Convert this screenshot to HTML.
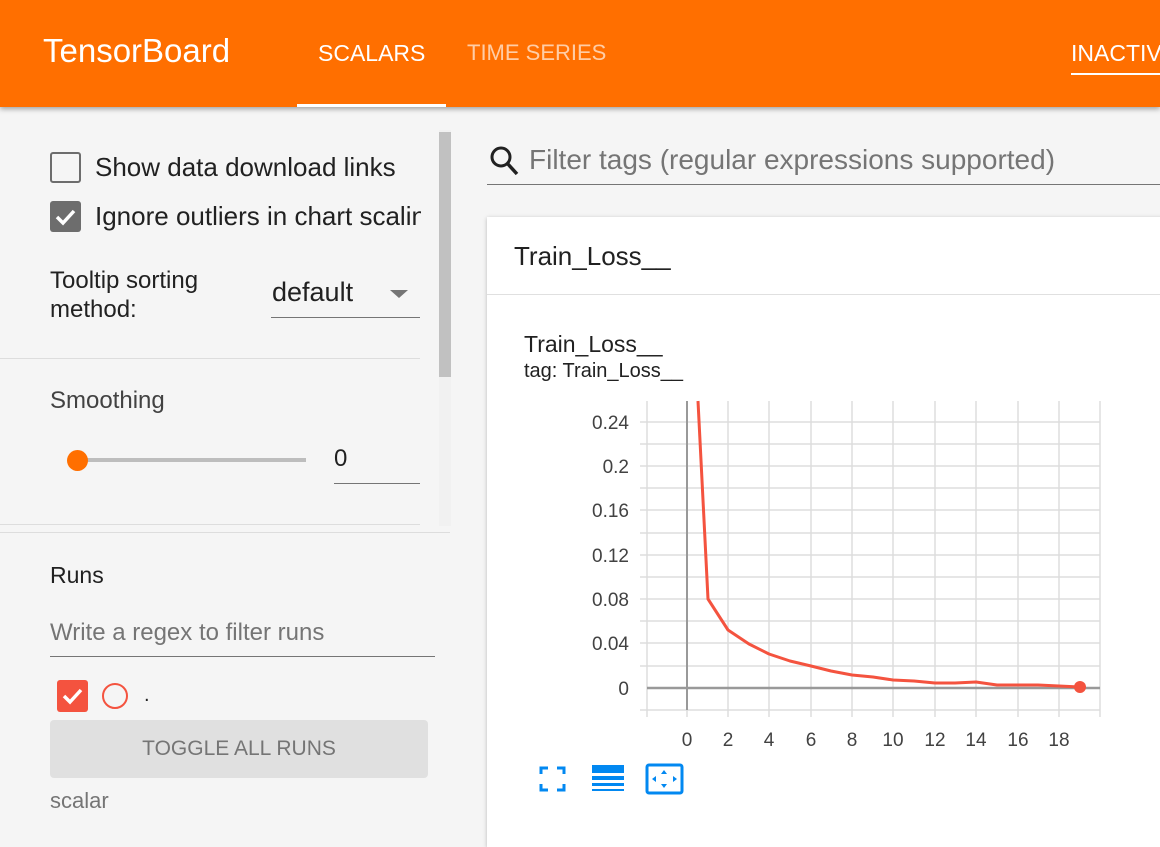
<!DOCTYPE html>
<html><head><meta charset="utf-8"><style>
*{margin:0;padding:0;box-sizing:border-box}
body{width:1160px;height:835px;overflow:hidden;background:#f5f5f5;font-family:"Liberation Sans",sans-serif;position:relative}
.a{position:absolute;white-space:nowrap}
</style></head><body>
<div class="a" style="left:0;top:0;width:1160px;height:107px;background:#ff6f00;box-shadow:0 2px 5px rgba(0,0,0,.35)"></div>
<div class="a" style="left:43px;top:32px;font-size:33px;color:#fff">TensorBoard</div>
<div class="a" style="left:318px;top:40px;font-size:23px;color:#fff">SCALARS</div>
<div class="a" style="left:467px;top:40px;font-size:22px;color:rgba(255,255,255,.65)">TIME SERIES</div>
<div class="a" style="left:297px;top:104px;width:149px;height:3px;background:#fff"></div>
<div class="a" style="left:1071px;top:40px;font-size:23px;color:#fff">INACTIVE</div>
<div class="a" style="left:1071px;top:73px;width:89px;height:2px;background:#fff"></div>

<!-- sidebar -->
<div class="a" style="left:50px;top:152px;width:31px;height:31px;border:2px solid #6d6d6d;border-radius:3px"></div>
<div class="a" style="left:95px;top:152px;font-size:26px;color:#212121">Show data download links</div>
<div class="a" style="left:50px;top:201px;width:31px;height:31px;background:#6d6d6d;border-radius:3px"></div>
<svg class="a" style="left:50px;top:201px" width="31" height="31"><path d="M7 16l6 6 11-12" stroke="#fff" stroke-width="3.5" fill="none"/></svg>
<div class="a" style="left:95px;top:201px;width:326px;overflow:hidden;font-size:26px;color:#212121">Ignore outliers in chart scaling</div>
<div class="a" style="left:50px;top:266px;font-size:24px;color:#212121;line-height:29px">Tooltip sorting<br>method:</div>
<div class="a" style="left:272px;top:277px;font-size:27px;color:#212121">default</div>
<svg class="a" style="left:390px;top:290px" width="20" height="10"><path d="M0 0h18l-9 8z" fill="#757575"/></svg>
<div class="a" style="left:271px;top:317px;width:149px;height:1px;background:#757575"></div>
<div class="a" style="left:0;top:358px;width:420px;height:1px;background:#ddd"></div>
<div class="a" style="left:50px;top:387px;font-size:24px;color:#424242">Smoothing</div>
<div class="a" style="left:78px;top:458px;width:228px;height:4px;background:#bdbdbd"></div>
<div class="a" style="left:67px;top:450px;width:21px;height:21px;border-radius:50%;background:#ff6f00"></div>
<div class="a" style="left:334px;top:445px;font-size:24px;color:#212121">0</div>
<div class="a" style="left:334px;top:483px;width:86px;height:1px;background:#757575"></div>
<div class="a" style="left:0;top:524px;width:420px;height:1px;background:#ddd"></div>
<div class="a" style="left:439px;top:130px;width:12px;height:396px;background:#f1f1f1"></div>
<div class="a" style="left:439px;top:132px;width:12px;height:245px;background:#c1c1c1"></div>
<div class="a" style="left:0;top:532px;width:450px;height:1px;background:#ddd"></div>
<div class="a" style="left:50px;top:562px;font-size:23px;color:#212121">Runs</div>
<div class="a" style="left:50px;top:619px;font-size:24px;color:#757575">Write a regex to filter runs</div>
<div class="a" style="left:50px;top:656px;width:385px;height:1px;background:#757575"></div>
<div class="a" style="left:57px;top:680px;width:31px;height:32px;background:#f4533f;border-radius:3px"></div>
<svg class="a" style="left:57px;top:680px" width="31" height="32"><path d="M7 16l6 6 11-12" stroke="#fff" stroke-width="3.5" fill="none"/></svg>
<div class="a" style="left:102px;top:683px;width:26px;height:26px;border:2.5px solid #f4533f;border-radius:50%"></div>
<div class="a" style="left:144px;top:684px;font-size:20px;color:#212121">.</div>
<div class="a" style="left:50px;top:720px;width:378px;height:58px;background:#e0e0e0;border-radius:4px;text-align:center;line-height:58px;font-size:21px;color:#757575">TOGGLE ALL RUNS</div>
<div class="a" style="left:50px;top:788px;font-size:22px;color:#757575">scalar</div>

<!-- main -->
<svg class="a" style="left:488px;top:143px" width="36" height="36"><circle cx="13" cy="14" r="9" stroke="#212121" stroke-width="3" fill="none"/><path d="M19 20l10 11" stroke="#212121" stroke-width="3.5"/></svg>
<div class="a" style="left:529px;top:144px;font-size:28px;color:#757575">Filter tags (regular expressions supported)</div>
<div class="a" style="left:487px;top:184px;width:673px;height:1px;background:#757575"></div>
<div class="a" style="left:487px;top:217px;width:680px;height:630px;background:#fff;box-shadow:0 1px 4px rgba(0,0,0,.25)"></div>
<div class="a" style="left:487px;top:294px;width:673px;height:1px;background:#e0e0e0"></div>
<div class="a" style="left:514px;top:241px;font-size:26px;color:#212121">Train_Loss__</div>
<div class="a" style="left:524px;top:331px;font-size:23px;color:#212121">Train_Loss__</div>
<div class="a" style="left:524px;top:360px;font-size:20px;color:#212121">tag: Train_Loss__</div>

<svg class="a" style="left:0;top:0" width="1160" height="835" font-family="Liberation Sans" font-size="19" fill="#424242">
<g stroke="#ddd" stroke-width="1.5">
<path d="M647 401V717M687 401V717M728 401V717M769 401V717M811 401V717M852 401V717M893 401V717M935 401V717M976 401V717M1018 401V717M1059 401V717M1100 401V717"/>
<path d="M640 422H1100M640 444H1100M640 466H1100M640 488H1100M640 510H1100M640 533H1100M640 555H1100M640 577H1100M640 599H1100M640 621H1100M640 643H1100M640 666H1100M640 710H1100"/>
</g>
<path d="M687 401V710" stroke="#999" stroke-width="2"/>
<path d="M647 688H1100" stroke="#999" stroke-width="2.5"/>
<g text-anchor="end">
<text x="629" y="429">0.24</text><text x="629" y="473">0.2</text><text x="629" y="517">0.16</text><text x="629" y="562">0.12</text><text x="629" y="606">0.08</text><text x="629" y="650">0.04</text><text x="629" y="695">0</text>
</g>
<g text-anchor="middle">
<text x="687" y="746">0</text><text x="728" y="746">2</text><text x="769" y="746">4</text><text x="811" y="746">6</text><text x="852" y="746">8</text><text x="893" y="746">10</text><text x="935" y="746">12</text><text x="976" y="746">14</text><text x="1018" y="746">16</text><text x="1059" y="746">18</text>
</g>
<path d="M698 401L708 599L728 630L749 644L769 654L790 661L811 666L831 671L852 675L873 677L893 680L914 681L935 683L955 683L976 682L997 685L1018 685L1038 685L1059 686L1080 687" stroke="#f4533f" stroke-width="3" fill="none" stroke-linejoin="round"/>
<circle cx="1080" cy="687" r="6" fill="#f4533f"/>
<g fill="none" stroke="#0288f1" stroke-width="3">
<path d="M541 774v-6h7M557 768h7v6M564 784v6h-7M548 790h-7v-6"/>
</g>
<g fill="#0288f1"><rect x="592" y="765" width="32" height="8"/><rect x="592" y="776" width="32" height="4"/><rect x="592" y="783" width="32" height="3"/><rect x="592" y="789" width="32" height="2"/></g>
<rect x="647" y="765" width="35" height="28" rx="2" fill="none" stroke="#0288f1" stroke-width="3"/>
<g fill="#0288f1"><path d="M664 770l-3 4h6zM664 788l-3-4h6zM652 779l4-3v6zM677 779l-4-3v6z"/></g>
</svg>
</body></html>
